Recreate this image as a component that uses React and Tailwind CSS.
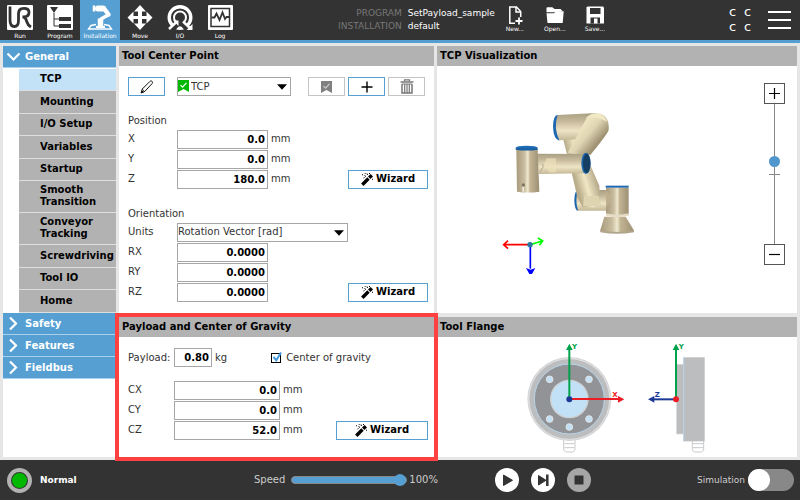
import { useState } from 'react';

const tabs = [
  { name: 'Run', icon: RunIcon },
  { name: 'Program', icon: ProgramIcon },
  { name: 'Installation', icon: InstallationIcon },
  { name: 'Move', icon: MoveIcon },
  { name: 'I/O', icon: IOIcon },
  { name: 'Log', icon: LogIcon },
];

const generalItems = [
  'TCP',
  'Mounting',
  'I/O Setup',
  'Variables',
  'Startup',
  'Smooth Transition',
  'Conveyor Tracking',
  'Screwdriving',
  'Tool IO',
  'Home',
];

function RunIcon() {
  return (
    <svg viewBox="0 0 26 25" className="w-[26px] h-[25px]">
      <rect width="26" height="25" rx="1" fill="#fff" />
      <path
        d="M3 1.500v13.500c0 4.500 1.500 6.500 4.300 6.500s4.200-2 4.200-6V9c0-3.700 1.500-5.700 5.300-5.700 3.500 0 5.200 1.400 5.200 4 0 2.800-1.700 4.500-5 4.500h-1.500c3.500.2 3.500 2.200 4.200 4.700.7 2.600 1.700 4 4.300 5.500"
        fill="none"
        stroke="#333"
        strokeWidth="2.8"
      />
    </svg>
  );
}

function ProgramIcon() {
  return (
    <svg viewBox="0 0 26 25" className="w-[26px] h-[25px]">
      <rect width="26" height="25" rx="1" fill="#fff" />
      <path d="M3 2h8L7 8z" fill="#333" />
      <path d="M7 8v13h5M7 14h5" fill="none" stroke="#333" />
      <rect x="12" y="12" width="12" height="4" fill="#333" />
      <rect x="12" y="19" width="12" height="4" fill="#333" />
    </svg>
  );
}

function InstallationIcon() {
  return (
    <svg viewBox="0 0 26 25" className="w-[26px] h-[25px]" fill="none" stroke="#fff">
      <path d="M11 3.5h5" strokeWidth="6" strokeLinecap="round" />
      <path d="M7 .5v6" strokeWidth="2.5" />
      <path d="M17 3.5l4.500 6" strokeWidth="4.5" strokeLinecap="round" />
      <path d="M21 10l-7 4" strokeWidth="3.5" strokeLinecap="round" />
      <path d="M13.500 13.500v7.500" strokeWidth="5.5" />
      <path d="M9 19.500l-5 1L1.500 24h23L22 20.500l-5-1" strokeWidth="1.4" />
      <path d="M9 22h9" strokeWidth="2" />
    </svg>
  );
}

function MoveIcon() {
  return (
    <svg viewBox="0 0 26 25" className="w-[26px] h-[25px]" fill="#fff">
      <path d="M13 0l6 6.500h-4V11h4.500V6.500l6 6-6 6V14H15v4.500h4L13 25l-6-6.500h4V14H6.500v4.500l-6-6 6-6V11H11V6.500H7z" />
    </svg>
  );
}

function IOIcon() {
  return (
    <svg viewBox="0 0 26 25" className="w-[26px] h-[25px]" fill="none" stroke="#fff">
      <circle cx="13" cy="12.5" r="10.8" strokeWidth="3.4" />
      <circle cx="13" cy="12.5" r="6" strokeWidth="2" />
      <path d="M4 26l8.500-9M22 26l-8.500-9" stroke="#333" strokeWidth="5" />
      <path d="M2 24l8-7.500M24 24l-8-7.500" strokeWidth="2.4" />
      <path d="M6 15.500h5.500V21zM25.500 19v6h-6z" fill="#fff" stroke="none" />
    </svg>
  );
}

function LogIcon() {
  return (
    <svg viewBox="0 0 26 25" className="w-[26px] h-[25px]">
      <rect x="1" width="25" height="25" rx="1" fill="#fff" />
      <rect x="4" y="3.5" width="18.5" height="18" fill="none" stroke="#333" strokeWidth="1.5" />
      <path
        d="M4.500 12.500h3l2-4 3 6.500 3-7.500L18 14l1.500-2h3"
        fill="none"
        stroke="#333"
        strokeWidth="1.8"
      />
    </svg>
  );
}

function NewIcon() {
  return (
    <svg viewBox="0 0 20 20" className="w-5 h-5" fill="none" stroke="#fff" strokeWidth="1.5">
      <path d="M10 18.200H4.800V2h6.700L15.700 6.500V12" />
      <path d="M11 2v5h4.700" />
      <path d="M14 12.500v7M10.500 16h7" strokeWidth="1.8" />
    </svg>
  );
}

function OpenIcon() {
  return (
    <svg viewBox="0 0 20 20" className="w-5 h-5" fill="#fff">
      <path d="M1.500 3.500c0-.8.4-1.200 1.200-1.200h4.600L9.500 4h6l2 2-6.500 1.200H1.500z" />
      <path d="M1.500 8.300h7.200l3-2h7l-1 11.700H2.500z" />
    </svg>
  );
}

function SaveIcon() {
  return (
    <svg viewBox="0 0 20 20" className="w-5 h-5">
      <path d="M2.500 1.500H18l1 1v16H1.500v-16z" fill="#fff" />
      <rect x="5" y="3" width="10.5" height="6" fill="#333" />
      <rect x="5.5" y="12.5" width="9.5" height="6" fill="#333" />
      <rect x="9" y="13.5" width="3.5" height="5" fill="#fff" />
    </svg>
  );
}

function PencilIcon() {
  return (
    <svg viewBox="0 0 14 14" className="w-[14px] h-[14px]" fill="none" stroke="#111">
      <path d="M1.300 12.700l1-3.700L9.800 1.500c.8-.8 1.700-.7 2.300-.1s.6 1.500-.1 2.300l-7.300 7.800z" />
      <path d="M2.300 9.200l2.400 2.300" strokeWidth=".8" />
      <path d="M1.200 12.800l.5-2 1.500 1.500z" fill="#111" />
    </svg>
  );
}

function BookmarkIcon({ color, tick }) {
  return (
    <svg viewBox="0 0 11 12" className="w-[11px] h-3">
      <path d="M0 0h11v12L5.500 9 0 12z" fill={color} />
      <path d="M2.500 5.200l2 2 4-4.400" fill="none" stroke={tick} strokeWidth="1.2" />
    </svg>
  );
}

function TrashIcon() {
  return (
    <svg viewBox="0 0 14 15" className="w-[14px] h-[15px]" fill="none" stroke="#777">
      <path d="M.5 3h13" strokeWidth="1.5" />
      <path d="M4.500 2.500V.8h5v1.700" strokeWidth="1.2" />
      <path d="M2 5v9h10V5" strokeWidth="1.5" />
      <path d="M2 5h10M4.700 5v9M7 5v9M9.300 5v9" strokeWidth="1.2" />
    </svg>
  );
}

function WandIcon() {
  return (
    <svg viewBox="0 0 13 13" className="w-[13px] h-[13px] shrink-0">
      <path d="M1.300 11.700l6.200-6.200" stroke="#000" strokeWidth="3.4" />
      <path d="M8.200 4.800l2.600-2.600" stroke="#000" strokeWidth="3.4" />
      <path d="M3.500 2.500l1.500 1M6 .5L6.500 2M2.500 5l1-.5M1 1.500l1 .5M8.500 0v1M12 6.500L11 6M4 0l.3.8" stroke="#000" />
    </svg>
  );
}

function Arrow() {
  return (
    <svg viewBox="0 0 10 6" className="pointer-events-none absolute right-1 top-[7px] w-[10px] h-[6px]">
      <path d="M0 .3h10L5 5.700z" fill="#000" />
    </svg>
  );
}

function ZoomButton({ label, path }) {
  return (
    <button aria-label={label} className="flex items-center justify-center w-[21px] h-[21px] bg-white border border-[#555]">
      <svg viewBox="0 0 11 11" className="w-[11px] h-[11px]" stroke="#000" strokeWidth="1.2">
        <path d={path} />
      </svg>
    </button>
  );
}

function WizardButton({ wide }) {
  return (
    <button
      className={`flex items-center justify-center gap-[2px] h-[19px] ml-auto border border-[#569fd3] bg-white font-bold text-black ${
        wide ? 'w-[92px]' : 'w-[80px]'
      }`}
    >
      <WandIcon />
      Wizard
    </button>
  );
}

function Field({ id, label, value, unit, wide, children }) {
  return (
    <div className="flex items-center h-5">
      <label htmlFor={id} className={wide ? 'w-[46px]' : 'w-[49px]'}>
        {label}
      </label>
      <input
        id={id}
        type="text"
        defaultValue={value}
        className={`h-[19px] px-[2px] border border-[#a6a6a6] bg-white text-right font-bold text-black ${
          wide ? 'w-[106px]' : 'w-[91px]'
        }`}
      />
      {unit && <span className="ml-[3px]">{unit}</span>}
      {children}
    </div>
  );
}

function Panel({ title, children }) {
  return (
    <section className="relative flex flex-col bg-white">
      <h2 className="h-5 px-[3px] leading-5 bg-[#b2b2b2] font-bold text-black">{title}</h2>
      {children}
    </section>
  );
}

function Header() {
  return (
    <header className="flex h-[43px] bg-[#333] border-b-[3px] border-[#569fd3] text-white">
      <nav className="flex shrink-0">
        {tabs.map(({ name, icon: Icon }) => (
          <button
            key={name}
            className={`flex flex-col items-center w-10 pt-[5px] text-[6px] leading-[8px] ${
              name === 'Installation' ? 'bg-[#569fd3]' : ''
            }`}
          >
            <Icon />
            <span className="mt-[2px]">{name}</span>
          </button>
        ))}
      </nav>
      <div className="flex mx-auto pr-3">
        <dl className="grid grid-cols-[auto_auto] content-start gap-x-[6px] pt-[7px] text-[9px] leading-[13px]">
          <dt className="text-right text-[#777]">PROGRAM</dt>
          <dd>SetPayload_sample</dd>
          <dt className="text-right text-[#777]">INSTALLATION</dt>
          <dd>default</dd>
        </dl>
        {[
          ['New...', NewIcon],
          ['Open...', OpenIcon],
          ['Save...', SaveIcon],
        ].map(([name, Icon]) => (
          <button key={name} className="flex flex-col items-center w-10 pt-[5px] text-[6px] leading-[8px]">
            <Icon />
            <span>{name}</span>
          </button>
        ))}
      </div>
      <div className="flex items-start shrink-0">
        <div className="grid grid-cols-2 w-[30px] pt-[4px] text-center text-[13px] leading-[15px]">
          <span>c</span>
          <span>c</span>
          <span>c</span>
          <span>c</span>
        </div>
        <button aria-label="Menu" className="flex flex-col gap-[6px] pt-[11px] ml-[13px] mr-[9px]">
          <span className="w-[23px] h-[2px] bg-white" />
          <span className="w-[23px] h-[2px] bg-white" />
          <span className="w-[23px] h-[2px] bg-white" />
        </button>
      </div>
    </header>
  );
}

function GroupButton({ name, open }) {
  return (
    <button className="flex items-center w-full h-[22px] pl-[3px] gap-[4px] bg-[#569fd3] border-b border-[#a9d0ec] font-bold text-white">
      <svg viewBox="0 0 15 15" className="w-[15px] h-[15px]" fill="none" stroke="#fff" strokeWidth="2.2">
        <path d={open ? 'M1.500 4.500l6 6 6-6' : 'M4 1.500l6 6-6 6'} />
      </svg>
      {name}
    </button>
  );
}

function Sidebar() {
  const [selected, setSelected] = useState('TCP');

  return (
    <nav className="w-[113px] shrink-0 bg-white">
      <GroupButton name="General" open />
      <ul className="mt-px pl-4">
        {generalItems.map((item) => (
          <li key={item} className="odd:min-h-[22px] even:min-h-[23px] flex border-b border-[#dedede]">
            <button
              onClick={() => setSelected(item)}
              className={`w-full pl-[21px] pt-[3px] pb-[4px] text-left font-bold leading-[12px] text-black ${
                selected === item ? 'bg-[#c3e2f7]' : 'bg-[#b2b2b2]'
              }`}
            >
              {item}
            </button>
          </li>
        ))}
      </ul>
      <GroupButton name="Safety" />
      <GroupButton name="Features" />
      <GroupButton name="Fieldbus" />
    </nav>
  );
}

function ToolCenterPoint() {
  return (
    <Panel title="Tool Center Point">
      <div className="flex flex-col pl-[9px] pr-[6px] py-[11px]">
        <div className="flex items-center">
          <button aria-label="Rename" className="flex items-center justify-center w-[37px] h-[19px] border border-[#569fd3]">
            <PencilIcon />
          </button>
          <div className="relative ml-3">
            <select aria-label="Active TCP" className="block appearance-none w-[114px] h-[19px] pl-[13px] border border-[#a6a6a6] bg-white">
              <option>TCP</option>
            </select>
            <span className="pointer-events-none absolute left-px top-[3px]">
              <BookmarkIcon color="#00b800" tick="#fff" />
            </span>
            <Arrow />
          </div>
          <div className="flex gap-[3px] ml-auto mr-[3px]">
            <button aria-label="Set default" className="flex items-center justify-center w-[37px] h-[19px] border border-[#c4c4c4]">
              <BookmarkIcon color="#808080" tick="#ccc" />
            </button>
            <button aria-label="Add" className="flex items-center justify-center w-[37px] h-[19px] border border-[#569fd3]">
              <svg viewBox="0 0 12 12" className="w-3 h-3" stroke="#000" strokeWidth="1.4">
                <path d="M6 .5v11M.5 6h11" />
              </svg>
            </button>
            <button aria-label="Remove" className="flex items-center justify-center w-[37px] h-[19px] border border-[#c4c4c4]">
              <TrashIcon />
            </button>
          </div>
        </div>

        <h3 className="mt-4 leading-[17px]">Position</h3>
        <Field id="x" label="X" value="0.0" unit="mm" />
        <Field id="y" label="Y" value="0.0" unit="mm" />
        <Field id="z" label="Z" value="180.0" unit="mm">
          <WizardButton />
        </Field>

        <h3 className="mt-4 leading-[17px]">Orientation</h3>
        <div className="flex items-center h-5">
          <label htmlFor="units" className="w-[49px]">
            Units
          </label>
          <div className="relative">
            <select id="units" className="block appearance-none w-[171px] h-[19px] border border-[#a6a6a6] bg-white">
              <option>Rotation Vector [rad]</option>
            </select>
            <Arrow />
          </div>
        </div>
        <Field id="rx" label="RX" value="0.0000" />
        <Field id="ry" label="RY" value="0.0000" />
        <Field id="rz" label="RZ" value="0.0000">
          <WizardButton />
        </Field>
      </div>
    </Panel>
  );
}

function Payload() {
  return (
    <Panel title="Payload and Center of Gravity">
      <div className="pl-[9px] pr-[6px] pt-[11px] pb-4">
        <div className="flex items-center">
          <label htmlFor="payload" className="w-[46px]">
            Payload:
          </label>
          <input
            id="payload"
            type="text"
            defaultValue="0.80"
            className="w-[38px] h-[19px] px-[2px] border border-[#a6a6a6] text-right font-bold text-black"
          />
          <span className="ml-[3px]">kg</span>
          <label className="flex items-center gap-[5px] ml-[44px]">
            <span className="relative">
              <input type="checkbox" defaultChecked className="block appearance-none w-[10px] h-[10px] border border-black" />
              <svg viewBox="0 0 12 12" className="pointer-events-none absolute -top-[2px] left-0 w-3 h-3">
                <path d="M2.500 6l2.800 3.200L10 1.500" fill="none" stroke="#459be0" strokeWidth="2" />
              </svg>
            </span>
            Center of gravity
          </label>
        </div>
        <div className="mt-[13px]">
          <Field id="cx" label="CX" value="0.0" unit="mm" wide />
          <Field id="cy" label="CY" value="0.0" unit="mm" wide />
          <Field id="cz" label="CZ" value="52.0" unit="mm" wide>
            <WizardButton wide />
          </Field>
        </div>
      </div>
      <div className="pointer-events-none absolute -inset-1 z-10 border-4 border-[#fd4040]" />
    </Panel>
  );
}

function Robot() {
  return (
    <svg viewBox="0 0 480 585" className="w-[160px] h-[195px]">
      <defs>
        <linearGradient id="vert" x1="0" x2="0" y1="0" y2="1">
          <stop offset="0" stopColor="#aa9f83" />
          <stop offset=".3" stopColor="#c6b99b" />
          <stop offset=".65" stopColor="#eee5c5" />
          <stop offset="1" stopColor="#c3b795" />
        </linearGradient>
        <linearGradient id="horiz">
          <stop offset="0" stopColor="#a89a7b" />
          <stop offset=".35" stopColor="#c9bda0" />
          <stop offset=".5" stopColor="#efe8cf" />
          <stop offset=".6" stopColor="#c2b493" />
          <stop offset="1" stopColor="#9d9073" />
        </linearGradient>
        <linearGradient id="upper" gradientUnits="userSpaceOnUse" x1="265" y1="120" x2="318" y2="165">
          <stop offset="0" stopColor="#eee5c0" />
          <stop offset=".45" stopColor="#dfd5b3" />
          <stop offset="1" stopColor="#9f9273" />
        </linearGradient>
        <linearGradient id="lower" gradientUnits="userSpaceOnUse" x1="255" y1="270" x2="325" y2="250">
          <stop offset="0" stopColor="#b9ad8b" />
          <stop offset=".4" stopColor="#f0e7c5" />
          <stop offset="1" stopColor="#a59878" />
        </linearGradient>
      </defs>

      {/* shoulder and base */}
      <ellipse cx="263" cy="331" rx="10" ry="31" fill="#1b66ad" />
      <path d="M264 300h98v62h-98q-10-31 0-62z" fill="url(#vert)" />
      <path d="M343 380h64l26 43q-50 14-103 0z" fill="url(#horiz)" />
      <path d="M331 420q50 12 101 0v7q-50 9-101 0z" fill="#b0a58c" />
      <path d="M348 293h68v82q-34 8-68 0z" fill="url(#horiz)" />
      <path d="M348 300l19 26-19 27z" fill="#beb08f" />
      <path d="M348 370q34 8 68 0v7q-34 8-68 0z" fill="#e4dcc4" />
      <path d="M347 287h69v6h-69z" fill="#1f68ad" />

      {/* lower arm */}
      <path d="M218 142l45-5 65 150 2 45-14 20h-38l-16-30-18-78z" fill="url(#lower)" />
      <path d="M283 318h44l6 30h-54z" fill="#dfd4b0" />

      {/* elbow and upper arm */}
      <path d="M204 75q-14-2-15 36 2 38 19 41z" fill="#1f68b0" />
      <path d="M203 75l115-6q18 35 0 76l-110 6q-18-38-5-76z" fill="url(#vert)" />
      <path d="M290 84q14-17 35-14 34 6 31 50-4 13-55 75l-68-6z" fill="url(#upper)" />
      <path d="M287 85q15-17 39-14 18 5 26 25-32-20-65-11z" fill="#f1e8c6" />

      {/* forearm and wrist */}
      <path d="M141 191l145 1v58l-139 2z" fill="url(#vert)" />
      <path d="M170 205h28v42h-20l-17-24z" fill="#eee1bb" opacity=".7" />
      <path d="M150 245l10-15-3-8" fill="none" stroke="#9b8e72" strokeWidth="2" />
      <ellipse cx="288" cy="220" rx="14" ry="32" fill="#1b65ae" />
      <ellipse cx="290" cy="220" rx="11" ry="29" fill="#153e63" />
      <path d="M79 177h64l5 128q-34 5-67 0z" fill="url(#horiz)" />
      <ellipse cx="110" cy="173" rx="33" ry="6" fill="#1d6bb5" />
      <path d="M77 174q33 5 66 0v5q-33 5-66 0z" fill="#165e9f" />
      <path d="M99 284l1 21" stroke="#f0ead7" strokeWidth="5" />
      <circle cx="100" cy="285" r="5" fill="#7c745e" />

      {/* coordinate axes */}
      <g fill="none" strokeWidth="5">
        <path d="M121 464H42M54 452l-13 12 13 12" stroke="#f00" />
        <path d="M121 464l36-11M144 444l14 9-10 13" stroke="#0f0" />
        <path d="M121 464v72" stroke="#00f" />
      </g>
      <path d="M108 534l14 5 14-5-10 18h-8z" fill="#00f" />
      <circle cx="120" cy="464" r="8" fill="#2878a0" />
    </svg>
  );
}

function Visualization() {
  return (
    <Panel title="TCP Visualization">
      <div className="flex flex-1 justify-between pl-[53px] pr-3">
        <div className="pt-6">
          <Robot />
        </div>
        <div className="flex flex-col items-center pt-[17px]">
          <ZoomButton label="Zoom in" path="M5.500 0v11M0 5.500h11" />
          <div className="relative">
            <span className="absolute left-0 top-[70px] w-[11px] h-px bg-[#888]" />
            <input
              type="range"
              aria-label="Zoom"
              defaultValue="60"
              className="relative block appearance-none bg-transparent w-[11px] h-[140px] [writing-mode:vertical-lr] [direction:rtl] [&::-webkit-slider-runnable-track]:w-px [&::-webkit-slider-runnable-track]:bg-[#888] [&::-webkit-slider-thumb]:appearance-none [&::-webkit-slider-thumb]:w-[11px] [&::-webkit-slider-thumb]:h-[11px] [&::-webkit-slider-thumb]:-ml-[5px] [&::-webkit-slider-thumb]:rounded-full [&::-webkit-slider-thumb]:bg-[#4f97cc]"
            />
          </div>
          <ZoomButton label="Zoom out" path="M0 5.500h11" />
        </div>
      </div>
    </Panel>
  );
}

function ToolFlange() {
  const holes = [
    [149, 148],
    [267, 148],
    [149, 267],
    [267, 267],
    [208, 291],
  ];

  return (
    <Panel title="Tool Flange">
      <div className="pl-[63px]">
        <svg viewBox="0 21 690 360" className="w-[230px] h-[120px]">
          <g fill="#fff" stroke="#c9cacc" strokeWidth="3">
            <path d="M191 325v35l6 6h22l6-6v-35M193 341h30M193 353h30" />
            <path d="M577 333v27l6 6h22l6-6v-27M577 341h34M577 353h34" />
          </g>
          <circle cx="208" cy="207" r="126" fill="#d5d6d8" />
          <circle cx="208" cy="207" r="121" fill="#bcbdbf" stroke="#e9e9ea" strokeWidth="2" />
          <circle cx="208" cy="207" r="105" fill="#929396" stroke="#b5d4ea" strokeWidth="3" />
          <circle cx="208" cy="207" r="56" fill="#c2e1f6" stroke="#d0d1d3" strokeWidth="4" />
          {holes.map(([x, y]) => (
            <circle key={`${x}-${y}`} cx={x} cy={y} r="10" fill="#c2e1f6" stroke="#e2e3e4" strokeWidth="3" />
          ))}
          <rect x="530" y="103" width="21" height="209" fill="#bcbdbf" stroke="#d3d4d6" strokeWidth="2" />
          <rect x="551" y="82" width="63" height="252" fill="#bcbdbf" />
          <path d="M551 82v252" stroke="#b5d4ea" strokeWidth="3" />

          <g fill="none" strokeWidth="6">
            <path d="M208 207h148" stroke="#ec1c24" />
            <path d="M208 207V55M528 207V55" stroke="#00a14b" />
            <path d="M528 208h-70" stroke="#1d3996" />
          </g>
          <path d="M354 198l19 10-19 10z" fill="#ec1c24" />
          <path d="M198 60l10-19 10 19zM518 60l10-19 10 19z" fill="#00a14b" />
          <path d="M463 198l-19 10 19 10z" fill="#1d3996" />
          <circle cx="208" cy="208" r="9" fill="#1d3996" />
          <circle cx="528" cy="208" r="9" fill="#ec1c24" />
          <g fontSize="21" fontWeight="bold">
            <text x="216" y="58" fill="#00a14b">Y</text>
            <text x="337" y="201" fill="#ec1c24">X</text>
            <text x="536" y="58" fill="#00a14b">Y</text>
            <text x="464" y="201" fill="#1d3996">Z</text>
          </g>
        </svg>
      </div>
    </Panel>
  );
}

function Footer() {
  const [speed, setSpeed] = useState(100);

  return (
    <footer className="grid grid-cols-[254fr_241fr_305fr] items-center h-10 bg-[#333] text-[#ccc]">
      <div className="flex items-center gap-2 pl-[7px]">
        <span className="w-[25px] h-[25px] rounded-full border-[4px] border-[#b2b2b2] p-px">
          <span className="block w-full h-full rounded-full bg-[#00b800]" />
        </span>
        <span className="text-[9px] font-bold text-white">Normal</span>
      </div>
      <div className="flex items-center">
        <label htmlFor="speed">Speed</label>
        <input
          id="speed"
          type="range"
          value={speed}
          onChange={(e) => setSpeed(e.target.value)}
          className="appearance-none w-[116px] ml-[6px] bg-transparent [&::-webkit-slider-runnable-track]:h-[8px] [&::-webkit-slider-runnable-track]:rounded-full [&::-webkit-slider-runnable-track]:border [&::-webkit-slider-runnable-track]:border-[#888] [&::-webkit-slider-runnable-track]:bg-[#569fd3] [&::-webkit-slider-thumb]:appearance-none [&::-webkit-slider-thumb]:w-3 [&::-webkit-slider-thumb]:h-3 [&::-webkit-slider-thumb]:-mt-[3px] [&::-webkit-slider-thumb]:rounded-full [&::-webkit-slider-thumb]:bg-[#569fd3]"
        />
        <span className="ml-[2px]">{speed}%</span>
      </div>
      <div className="flex items-center gap-3">
        <button aria-label="Play" className="w-6 h-6 rounded-full bg-white">
          <svg viewBox="0 0 24 24">
            <path d="M8.500 7v10.500l9-5.200z" fill="#333" stroke="#333" strokeLinejoin="round" />
          </svg>
        </button>
        <button aria-label="Step" className="w-6 h-6 rounded-full bg-white">
          <svg viewBox="0 0 24 24">
            <path d="M7.500 7.500V17l7.500-4.700z" fill="#333" stroke="#333" strokeLinejoin="round" />
            <path d="M16.300 6.500V18" stroke="#333" strokeWidth="2.5" />
          </svg>
        </button>
        <button aria-label="Stop" className="w-6 h-6 rounded-full bg-[#a6a6a6]">
          <svg viewBox="0 0 24 24">
            <rect x="7.5" y="7.5" width="9" height="9" rx=".5" fill="#333" />
          </svg>
        </button>
        <label className="flex items-center gap-[3px] ml-auto mr-[6px] text-[9px]">
          Simulation
          <input
            type="checkbox"
            role="switch"
            className="appearance-none w-[46px] h-[22px] rounded-full bg-[#888] before:block before:w-[22px] before:h-[22px] before:rounded-full before:bg-white checked:before:ml-6"
          />
        </label>
      </div>
    </footer>
  );
}

function App() {
  return (
    <div className="flex flex-col min-h-screen bg-[#e6e6e6] font-['DejaVu_Sans',sans-serif] text-[10px] leading-[14px] text-[#333]">
      <Header />
      <main className="flex flex-1 gap-[3px] p-[3px]">
        <Sidebar />
        <div className="grid flex-1 grid-cols-[315fr_360fr] grid-rows-[auto_1fr] gap-x-[3px] gap-y-1">
          <ToolCenterPoint />
          <Visualization />
          <Payload />
          <ToolFlange />
        </div>
      </main>
      <Footer />
    </div>
  );
}

export default App;
